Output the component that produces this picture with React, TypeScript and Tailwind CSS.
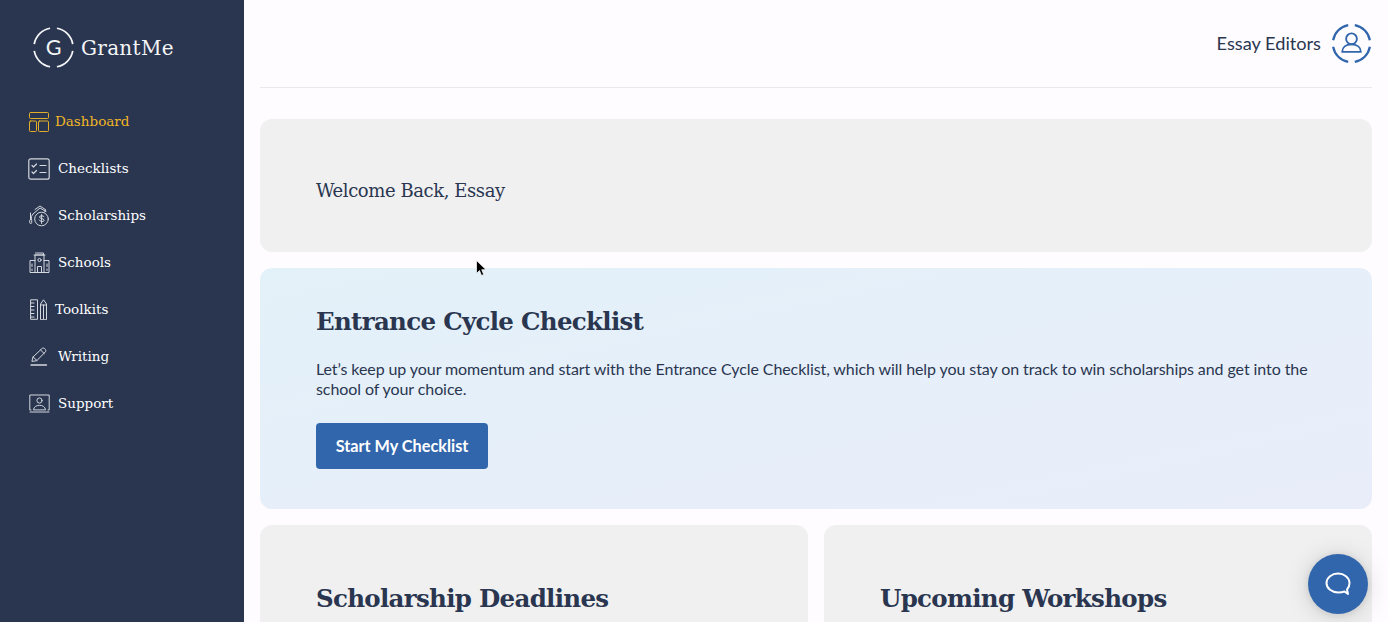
import type { ReactNode } from "react";

const iconProps = {
  fill: "none",
  stroke: "currentColor",
  strokeWidth: 1,
  strokeLinecap: "round" as const,
  strokeLinejoin: "round" as const,
};

const DashboardIcon = () => (
  <svg width="20" height="20" viewBox="0 0 20 20" {...iconProps}>
    <rect x="0.5" y="0.5" width="19" height="6" rx="1" />
    <rect x="0.5" y="9" width="7" height="10.5" rx="1" />
    <rect x="9.5" y="9" width="10" height="10.5" rx="1" />
  </svg>
);

const ChecklistIcon = () => (
  <svg width="22" height="22" viewBox="0 0 22 22" {...iconProps} strokeWidth={1.2}>
    <rect x="0.8" y="0.8" width="20.4" height="20.4" rx="2" />
    <path d="M4 7.500l1.500 1.500L8.500 6M12 7.500h6M4 14l1.500 1.500L8.500 12.500M12 14.500h6" />
  </svg>
);

const ScholarshipIcon = () => (
  <svg width="20" height="22" viewBox="0 0 20 22" {...iconProps}>
    <circle cx="12.500" cy="14" r="6.800" />
    <path d="M15 11.500c-.8-1-4.500-1.200-4.500.6 0 2 4.600.9 4.600 3.200 0 1.900-3.900 1.600-5-.4M12.600 9.500v9" />
    <path d="M4 9l7-6 6 3.500M6 4.500L11 1l6 4-1.500 2M4 9c-1.500 1.500-2 3.500-1.500 5.500M1.500 8v6.500" />
    <rect x="0.700" y="14.500" width="2" height="4" rx="1" />
  </svg>
);

const SchoolIcon = () => (
  <svg width="21" height="21" viewBox="0 0 21 21" {...iconProps}>
    <path d="M6 20.500V3h9v17.500M5 3h11M6.500 1h8v2M8.500 20.500v-6h4v6" />
    <circle cx="10.500" cy="8" r="1.600" />
    <path d="M6 8.500H1v12h19v-12h-5M3 12v2.500M18 12v2.500M3 17v1.500M18 17v1.500" />
  </svg>
);

const ToolkitIcon = () => (
  <svg width="18" height="21" viewBox="0 0 18 21" {...iconProps}>
    <rect x="1" y="0.800" width="6.500" height="19.500" />
    <path d="M1 4h3M1 7.500h3M1 11h3M1 14.500h3M1 18h3" />
    <path d="M10.500 20.300V5L13.500 0.800 16.500 5v15.300zM10.500 6h6M13.500 6v14" />
  </svg>
);

const WritingIcon = () => (
  <svg width="18" height="19" viewBox="0 0 18 19" {...iconProps}>
    <path d="M2 14l1-4L12 1.500c1-.8 2-.6 3 .4s1.200 2 .3 3L7 13.500z" />
    <path d="M10.500 3l3.800 3.600M3 10l4 3.500" />
    <path d="M1 18h15.500" strokeWidth="1.400" />
  </svg>
);

const SupportIcon = () => (
  <svg width="21" height="19" viewBox="0 0 21 19" {...iconProps}>
    <path d="M2 16H.8V1h19.400v15H19" />
    <circle cx="10.500" cy="6.500" r="2.600" />
    <path d="M4.500 15.500c.5-2.800 3-4.200 6-4.200s5.500 1.400 6 4.200zM1 18h19" />
  </svg>
);

// four-arc ring used by the logo and the avatar
const Ring = ({ children, size, stroke }: { children?: ReactNode; size: number; stroke: number }) => (
  <svg width={size} height={size} viewBox="0 0 44 44" fill="none" stroke="currentColor" strokeWidth={stroke}>
    <path d="M18.500 2.300A20 20 0 0 0 2.300 18.500" />
    <path d="M25.500 2.300A20 20 0 0 1 41.700 18.500" />
    <path d="M41.700 25.500A20 20 0 0 1 25.500 41.700" />
    <path d="M18.500 41.700A20 20 0 0 1 2.300 25.500" />
    {children}
  </svg>
);

const navItems = [
  { label: "Dashboard", icon: <DashboardIcon />, active: true },
  { label: "Checklists", icon: <ChecklistIcon /> },
  { label: "Scholarships", icon: <ScholarshipIcon /> },
  { label: "Schools", icon: <SchoolIcon /> },
  { label: "Toolkits", icon: <ToolkitIcon />, narrow: true },
  { label: "Writing", icon: <WritingIcon /> },
  { label: "Support", icon: <SupportIcon /> },
];

const slab = "font-['DejaVu_Serif',serif]";

export default function App() {
  return (
    <div className="relative flex h-[622px] w-[1388px] overflow-hidden bg-[#fefcff] font-['Lato',sans-serif] text-[#2a3650]">
      {/* Sidebar */}
      <aside className="w-[244px] shrink-0 bg-[#2a3650] text-white">
        <div className="flex items-center gap-[4px] pl-[32px] pt-[26px] text-[#f4f5f7]">
          <Ring size={43} stroke={1.8}>
            <text x="22" y="29.500" textAnchor="middle" fill="currentColor" stroke="none" fontSize="22" fontFamily="Lato, sans-serif">
              G
            </text>
          </Ring>
          <span className={`${slab} ml-[2px] text-[20px] tracking-[0.3px]`}>GrantMe</span>
        </div>
        <nav className="mt-[29px] flex flex-col pl-[28px]">
          {navItems.map((item) => (
            <div
              key={item.label}
              className={`flex h-[47px] items-center ${item.active ? "text-[#efb526]" : "text-white"}`}
            >
              <span
                className={`flex w-[22px] justify-center ${item.active ? "text-[#e3ac2a]" : "text-[#d3d7de]"}`}
              >
                {item.icon}
              </span>
              <span
                className={`${slab} text-[13.500px] ${item.narrow || item.active ? "ml-[5px]" : "ml-[8px]"}`}
              >
                {item.label}
              </span>
            </div>
          ))}
        </nav>
      </aside>

      {/* Main */}
      <main className="flex min-w-0 flex-1 flex-col px-[16px]">
        <header className="flex h-[88px] shrink-0 items-center justify-end border-b border-[#e9e8ec] pb-[1px]">
          <span className="mr-[10px] pt-[2px] text-[18.200px]">Essay Editors</span>
          <span className="text-[#3266ac]">
            <Ring size={41} stroke={2.400}>
              <circle cx="22" cy="17" r="5.800" strokeWidth="2" />
              <path d="M12 31c0-5 4-8 10-8s10 3 10 8z" strokeWidth="2" strokeLinejoin="round" />
            </Ring>
          </span>
        </header>

        <section className="mt-[31px] flex h-[133px] shrink-0 items-center rounded-[12px] bg-[#f0f0f1] px-[56px] pt-[10px]">
          <h1 className={`${slab} text-[18px] tracking-[-0.42px]`}>Welcome Back, Essay</h1>
        </section>

        <section className="mt-[16px] h-[241px] shrink-0 rounded-[12px] bg-gradient-to-br from-[#e3f1f9] to-[#e9edfa] px-[56px] pt-[37px]">
          <h2 className={`${slab} text-[24.500px] font-bold leading-[34px] tracking-[-0.7px]`}>
            Entrance Cycle Checklist
          </h2>
          <p className="mt-[20px] text-[16px] leading-[20px] tracking-[-0.085px]">
            Let’s keep up your momentum and start with the Entrance Cycle Checklist, which will help you stay on track
            to win scholarships and get into the school of your choice.
          </p>
          <button className="mt-[24px] h-[46px] w-[172px] rounded-[4px] bg-[#3266ac] text-[16.250px] font-bold text-white">
            Start My Checklist
          </button>
        </section>

        <div className="mt-[16px] grid shrink-0 grid-cols-2 gap-[16px]">
          {["Scholarship Deadlines", "Upcoming Workshops"].map((title) => (
            <section key={title} className="h-[200px] rounded-[12px] bg-[#f0f0f1] px-[56px] pt-[57px]">
              <h2 className={`${slab} text-[24.500px] font-bold leading-[34px] tracking-[-0.7px]`}>{title}</h2>
            </section>
          ))}
        </div>
      </main>

      {/* Chat launcher */}
      <button className="absolute left-[1308px] top-[554px] flex h-[60px] w-[60px] items-center justify-center rounded-full bg-[#3266ac] text-white shadow-[0_1px_6px_rgba(0,0,0,0.1),0_2px_24px_rgba(0,0,0,0.15)]">
        <svg width="26" height="26" viewBox="0 0 26 26" fill="none" stroke="currentColor" strokeWidth="2" strokeLinejoin="round">
          <path d="M13 2.500C7 2.500 1.500 6.500 1.500 12S7 21.500 13 21.500c2 0 5-.4 6.500-1l3.500 2.500-1-4.500c1.500-1.500 2.500-4 2.500-6.500 0-5.500-5.500-9.500-11.500-9.500z" />
        </svg>
      </button>

      {/* Mouse cursor */}
      <svg className="absolute left-[476px] top-[260px]" width="11" height="17" viewBox="0 0 11 17">
        <path d="M0.500 0.500v13l3-3 2 5 2.200-1-2-4.800h4.300z" fill="#000" stroke="#fff" strokeWidth="0.700" />
      </svg>
    </div>
  );
}
